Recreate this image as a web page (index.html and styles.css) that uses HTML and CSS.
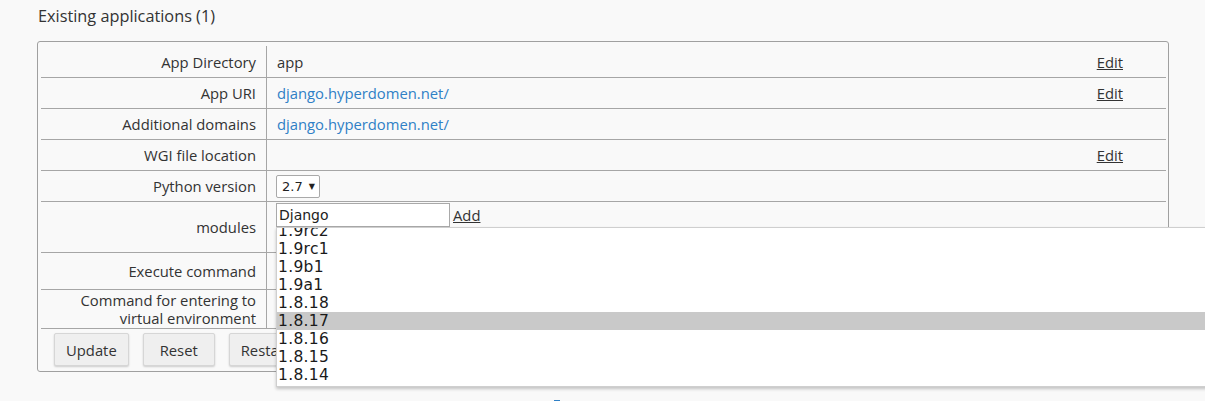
FILE: index.html
```html
<!DOCTYPE html>
<html>
<head>
<meta charset="utf-8">
<link rel="stylesheet" href="styles.css">
</head>
<body>
<h2 class="title">Existing applications (1)</h2>
<div class="panel">
  <div class="grid">
    <div class="row r-first">
      <div class="label">App Directory</div>
      <div class="value"><span class="text">app</span></div>
      <div class="action"><a class="link-dark" href="#">Edit</a></div>
    </div>
    <div class="row">
      <div class="label">App URI</div>
      <div class="value"><a class="link text" href="#">django.hyperdomen.net/</a></div>
      <div class="action"><a class="link-dark" href="#">Edit</a></div>
    </div>
    <div class="row">
      <div class="label">Additional domains</div>
      <div class="value"><a class="link text" href="#">django.hyperdomen.net/</a></div>
      <div class="action"></div>
    </div>
    <div class="row">
      <div class="label">WGI file location</div>
      <div class="value"></div>
      <div class="action"><a class="link-dark" href="#">Edit</a></div>
    </div>
    <div class="row">
      <div class="label">Python version</div>
      <div class="value"><div class="select">2.7 <span class="caret">&#9660;</span></div></div>
      <div class="action"></div>
    </div>
    <div class="row r-modules">
      <div class="label">modules</div>
      <div class="value top">
        <div class="combo">
          <div class="input">Django</div>
          <a class="link-dark add" href="#">Add</a>
          <div class="dropdown">
            <div class="items">
              <div class="item">1.9rc2</div>
              <div class="item">1.9rc1</div>
              <div class="item">1.9b1</div>
              <div class="item">1.9a1</div>
              <div class="item">1.8.18</div>
              <div class="item active">1.8.17</div>
              <div class="item">1.8.16</div>
              <div class="item">1.8.15</div>
              <div class="item">1.8.14</div>
            </div>
          </div>
        </div>
      </div>
      <div class="action"></div>
    </div>
    <div class="row r-exec">
      <div class="label">Execute command</div>
      <div class="value"></div>
      <div class="action"></div>
    </div>
    <div class="row r-venv">
      <div class="label">Command for entering to<br>virtual environment</div>
      <div class="value"></div>
      <div class="action"></div>
    </div>
  </div>
  <div class="buttons">
    <button class="btn">Update</button>
    <button class="btn">Reset</button>
    <button class="btn">Restart</button>
    <button class="btn">Remove</button>
  </div>
</div>
<div class="footer-mark"></div>
</body>
</html>
```
FILE: styles.css
```css
html, body {
  margin: 0;
  padding: 0;
  overflow: hidden;
}
body {
  background: #f9f9f9;
  font-family: "Open Sans", "Liberation Sans", sans-serif;
  font-size: 14.8px;
  color: #333;
  width: 1205px;
  height: 401px;
}
.title {
  margin: 0;
  padding: 5px 0 0 38px;
  font-size: 16.3px;
  line-height: 22px;
  font-weight: 400;
  color: #333;
}
.panel {
  margin: 14px 0 0 37px;
  width: 1132px;
  box-sizing: border-box;
  border: 1px solid #a0a0a0;
  border-radius: 3px;
  padding: 4px 2px 5px 3px;
}
.grid {
  display: flex;
  flex-direction: column;
}
.row {
  display: grid;
  grid-template-columns: 226px 1fr 120px;
  height: 31px;
  box-sizing: border-box;
  border-bottom: 1px solid #a6a6a6;
}
.r-first { height: 32px; }
.r-modules { height: 51px; }
.r-exec { height: 37px; }
.r-venv { height: 39px; }
.label {
  border-right: 1px solid #a6a6a6;
  text-align: right;
  padding-right: 10px;
  display: flex;
  align-items: center;
  justify-content: flex-end;
  line-height: 18px;
}
.value {
  padding-left: 9px;
  display: flex;
  align-items: center;
}
.value .text {
  margin-left: 1px;
}
.value.top {
  align-items: flex-start;
  padding-top: 1px;
}
.action {
  display: flex;
  align-items: center;
  justify-content: flex-end;
  padding-right: 43px;
}
.link {
  color: #2f80c6;
  text-decoration: none;
}
.link-dark {
  color: #333;
  text-decoration: underline;
}
.select {
  width: 44px;
  height: 23px;
  box-sizing: border-box;
  border: 1px solid #a9a9a9;
  border-radius: 2px;
  background: #fff;
  font-family: "DejaVu Sans", sans-serif;
  font-size: 13px;
  line-height: 21px;
  padding-left: 5px;
  color: #222;
  margin-top: 1px;
}
.caret {
  font-size: 8px;
  vertical-align: 2px;
  margin-left: 2px;
}
.combo {
  position: relative;
  display: flex;
  align-items: center;
}
.input {
  width: 174px;
  height: 24px;
  box-sizing: border-box;
  border: 1px solid #a9a9a9;
  background: #fff;
  font-family: "DejaVu Sans", sans-serif;
  font-size: 14px;
  line-height: 22px;
  padding-left: 2px;
  color: #222;
}
.add {
  margin-left: 3px;
}
.dropdown {
  position: absolute;
  left: 0;
  top: 24px;
  width: 945px;
  height: 160px;
  box-sizing: border-box;
  background: #fff;
  border: 1px solid #cfcfcf;
  box-shadow: 0 2px 3px rgba(0, 0, 0, 0.22);
  overflow: hidden;
  z-index: 10;
}
.items {
  margin-top: -6px;
}
.item {
  height: 18px;
  line-height: 18px;
  padding-left: 1px;
  font-family: "DejaVu Sans", sans-serif;
  font-size: 15.5px;
  letter-spacing: 0.3px;
  color: #1a1a1a;
}
.item.active {
  background: #c9c9c9;
}
.buttons {
  display: flex;
  gap: 14px;
  padding: 4px 0 0 13px;
}
.btn {
  font-family: "Open Sans", "Liberation Sans", sans-serif;
  font-size: 14.8px;
  color: #333;
  height: 33px;
  min-width: 72px;
  padding: 0 11px;
  background: #efefef;
  border: 1px solid #d6d6d6;
  border-radius: 2px;
  box-shadow: 0 1px 2px rgba(0, 0, 0, 0.18);
}
.footer-mark {
  margin: 28px 0 0 554px;
  width: 6px;
  height: 2px;
  background: #2f80c6;
}
```
